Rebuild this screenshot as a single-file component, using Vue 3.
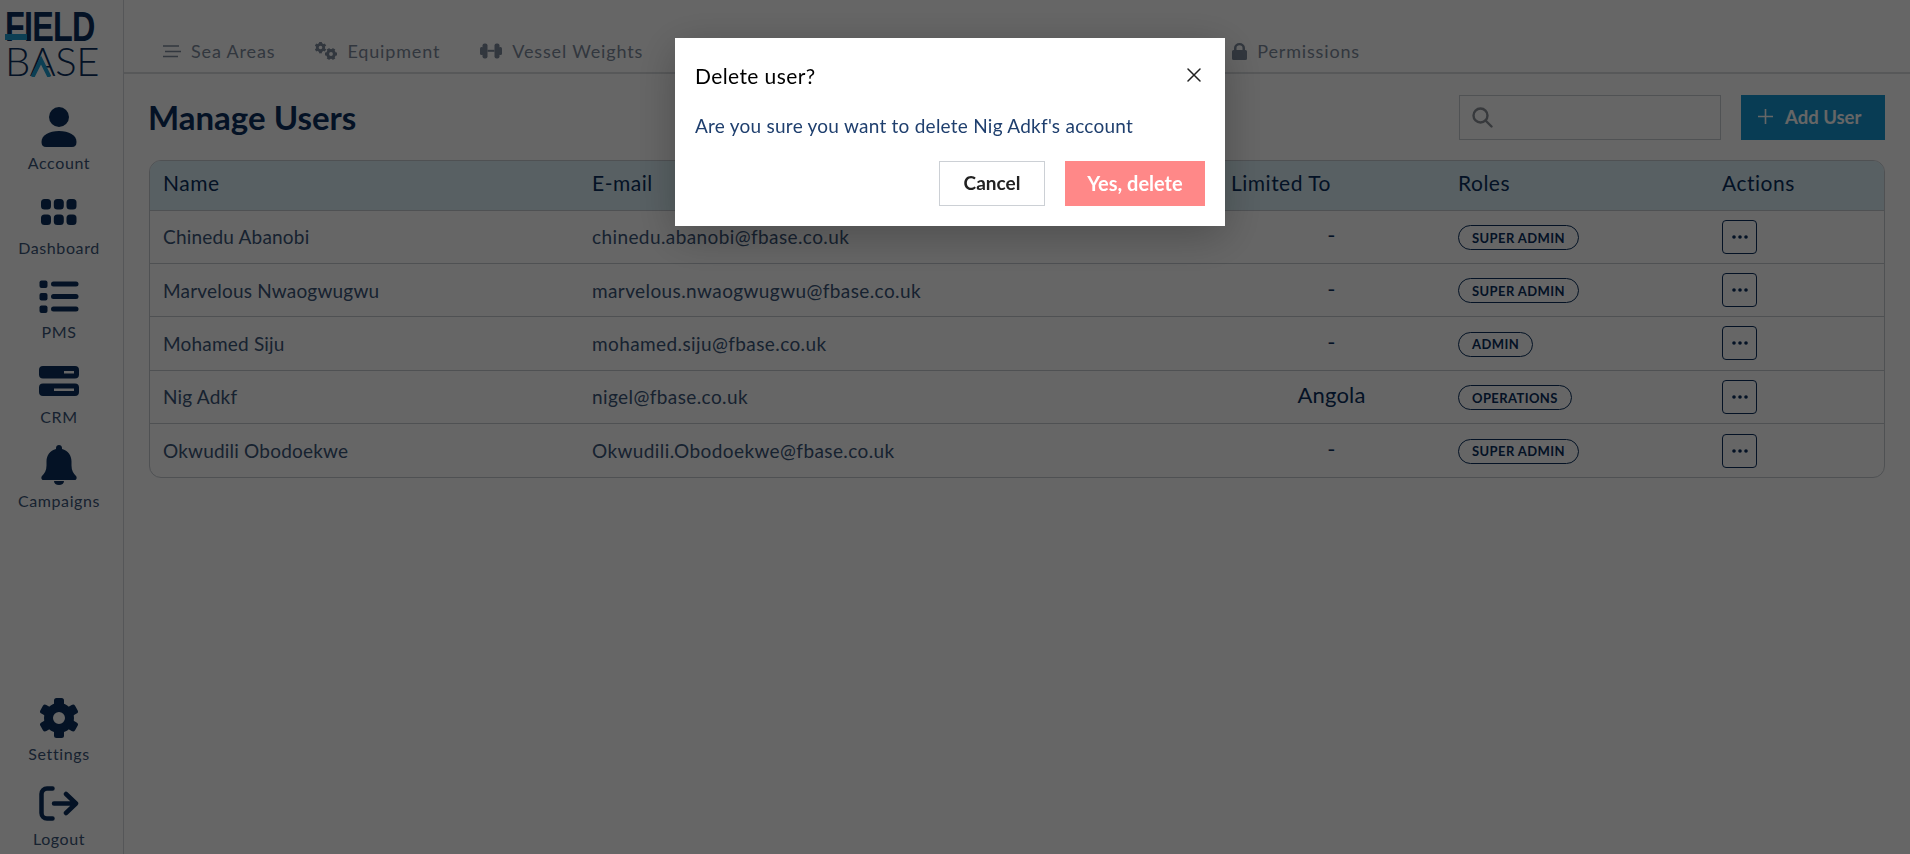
<script setup>
const rows = [
  { name: 'Chinedu Abanobi', email: 'chinedu.abanobi@fbase.co.uk', limited: '-', role: 'SUPER ADMIN' },
  { name: 'Marvelous Nwaogwugwu', email: 'marvelous.nwaogwugwu@fbase.co.uk', limited: '-', role: 'SUPER ADMIN' },
  { name: 'Mohamed Siju', email: 'mohamed.siju@fbase.co.uk', limited: '-', role: 'ADMIN' },
  { name: 'Nig Adkf', email: 'nigel@fbase.co.uk', limited: 'Angola', role: 'OPERATIONS' },
  { name: 'Okwudili Obodoekwe', email: 'Okwudili.Obodoekwe@fbase.co.uk', limited: '-', role: 'SUPER ADMIN' },
]
</script>

<template>
  <div class="page">
    <aside class="side">
      <div class="logo">
        <div class="logo-top"><span class="logo-word">FIELD</span><i class="logo-bar"></i></div>
        <div class="logo-bot">
          <span class="logo-word2">BASE</span>
          <svg class="chev" viewBox="0 0 30 30" width="30" height="30"><path d="M7.500 29 L15 11 L22.500 29Z" fill="#fff"/><path d="M6.500 30 L15 13 L23.500 30" fill="none" stroke="#1f9fd2" stroke-width="4"/></svg>
        </div>
      </div>
      <nav class="nav">
        <a class="item">
          <span class="ic"><svg width="36" height="40" viewBox="0 0 36 40"><circle cx="18" cy="10" r="10"/><path d="M0.5 35 C0.5 28 8 24 18 24 S35.500 28 35.500 35 C35.500 38.500 34 40 31 40 H5 C2 40 0.500 38.500 0.500 35Z"/></svg></span>
          <span class="lb">Account</span>
        </a>
        <a class="item">
          <span class="ic"><svg width="36" height="26" viewBox="0 0 36 26"><rect x="0" y="0" width="10" height="10.500" rx="3.500"/><rect x="12.800" y="0" width="10" height="10.500" rx="3.500"/><rect x="25.500" y="0" width="10" height="10.500" rx="3.500"/><rect x="0" y="15.500" width="10" height="10.500" rx="3.500"/><rect x="12.800" y="15.500" width="10" height="10.500" rx="3.500"/><rect x="25.500" y="15.500" width="10" height="10.500" rx="3.500"/></svg></span>
          <span class="lb">Dashboard</span>
        </a>
        <a class="item">
          <span class="ic"><svg width="40" height="33" viewBox="0 0 40 33"><rect x="0.500" y="0.500" width="8" height="7.500" rx="2"/><rect x="0.500" y="13" width="8" height="7.500" rx="2"/><rect x="0.500" y="25.500" width="8" height="7.500" rx="2"/><rect x="12" y="1.500" width="27.500" height="5" rx="2.500"/><rect x="12" y="14" width="27.500" height="5" rx="2.500"/><rect x="12" y="26.500" width="27.500" height="5" rx="2.500"/></svg></span>
          <span class="lb">PMS</span>
        </a>
        <a class="item">
          <span class="ic"><svg width="40" height="30" viewBox="0 0 40 30"><path fill-rule="evenodd" d="M4 0 H36 a4 4 0 0 1 4 4 V8.500 a4 4 0 0 1 -4 4 H4 a4 4 0 0 1 -4 -4 V4 a4 4 0 0 1 4 -4Z M25 5 V7.500 H35 V5Z"/><path fill-rule="evenodd" d="M4 17.500 H36 a4 4 0 0 1 4 4 V26 a4 4 0 0 1 -4 4 H4 a4 4 0 0 1 -4 -4 V21.500 a4 4 0 0 1 4 -4Z M15 22.500 V25 H35 V22.500Z"/></svg></span>
          <span class="lb">CRM</span>
        </a>
        <a class="item">
          <span class="ic"><svg width="36" height="40" viewBox="0 0 36 40"><path d="M18 0 c1.600 0 3 1.300 3 3 v1 c6 1.400 9.500 6.500 9.500 12.500 v4 c0 5 2 8 4.500 10.500 c1.400 1.500 .4 4 -1.600 4 H2.600 c-2 0 -3 -2.500 -1.600 -4 C3.500 28.500 5.500 25.500 5.500 20.500 v-4 C5.500 10.500 9 5.400 15 4 V3 C15 1.300 16.400 0 18 0Z M13 36 h10 c0 2.500 -2.200 4 -5 4 s-5 -1.500 -5 -4Z"/></svg></span>
          <span class="lb">Campaigns</span>
        </a>
      </nav>
      <nav class="nav nav-bottom">
        <a class="item">
          <span class="ic"><svg width="40" height="40" viewBox="-20 -20 40 40"><circle r="10.500" fill="none" stroke="currentColor" stroke-width="9"/><rect v-for="a in [0,60,120,180,240,300]" :key="a" x="-5" y="-20" width="10" height="10" rx="2.500" :transform="`rotate(${a})`"/></svg></span>
          <span class="lb">Settings</span>
        </a>
        <a class="item">
          <span class="ic"><svg width="40" height="35" viewBox="0 0 40 35" stroke="currentColor" stroke-width="4.500" stroke-linecap="round" stroke-linejoin="round"><path fill="none" d="M13.500 2.500 H8 a5.500 5.500 0 0 0 -5.500 5.500 V27 a5.500 5.500 0 0 0 5.500 5.500 H13.500"/><path fill="none" d="M15 17.500 H36 M27 8 L37 17.500 L27 27"/></svg></span>
          <span class="lb">Logout</span>
        </a>
      </nav>
    </aside>

    <main class="main">
      <div class="tabs">
        <a class="tab">
          <svg width="18" height="14" viewBox="0 0 18 14" fill="none" stroke="currentColor" stroke-width="1.600"><path d="M0 2 H16 M2 7.500 H18 M0 12.500 H15"/></svg>
          Sea Areas
        </a>
        <a class="tab">
          <svg width="22" height="18" viewBox="0 0 22 18">
            <g transform="translate(5.500 5.500)"><circle r="3.200" fill="none" stroke="currentColor" stroke-width="2.800"/><rect v-for="a in [0,60,120,180,240,300]" :key="a" x="-1.400" y="-5.800" width="2.800" height="2.600" :transform="`rotate(${a})`"/></g>
            <g transform="translate(16 12)"><circle r="3.400" fill="none" stroke="currentColor" stroke-width="3"/><rect v-for="a in [0,60,120,180,240,300]" :key="a" x="-1.500" y="-6" width="3" height="2.600" :transform="`rotate(${a + 30})`"/></g>
          </svg>
          Equipment
        </a>
        <a class="tab">
          <svg width="22" height="16" viewBox="0 0 22 16"><rect x="0" y="4" width="3.500" height="8" rx="1.500"/><rect x="2.500" y="0.500" width="5" height="15" rx="2"/><rect x="7.500" y="6.800" width="7" height="2"/><rect x="14.500" y="0.500" width="5" height="15" rx="2"/><rect x="18.500" y="4" width="3.500" height="8" rx="1.500"/></svg>
          Vessel Weights
        </a>
        <a class="tab tab-far">
          <svg width="15" height="17" viewBox="0 0 15 17"><path fill-rule="evenodd" d="M2 7 V5 a5.500 5 0 0 1 11 0 V7 h.5 a1.500 1.500 0 0 1 1.500 1.500 V15.500 a1.500 1.500 0 0 1 -1.500 1.500 H1.500 A1.500 1.500 0 0 1 0 15.500 V8.500 A1.500 1.500 0 0 1 1.500 7Z M4.500 7 H10.500 V5 a3 2.800 0 0 0 -6 0Z"/></svg>
          Permissions
        </a>
      </div>

      <section class="content">
        <div class="head">
          <h1>Manage Users</h1>
          <div class="search">
            <svg width="21" height="21" viewBox="0 0 21 21" fill="none" stroke="currentColor" stroke-width="2.400" stroke-linecap="round"><circle cx="8.500" cy="8.500" r="7"/><path d="M13.500 13.500 L19.500 19.500"/></svg>
          </div>
          <button class="add"><svg width="15" height="15" viewBox="0 0 15 15" stroke="currentColor" stroke-width="1.600"><path d="M7.500 0 V15 M0 7.500 H15"/></svg>Add User</button>
        </div>

        <div class="table-wrap">
          <table>
            <colgroup><col style="width:429px"><col style="width:639px"><col style="width:227px"><col style="width:264px"><col style="width:177px"></colgroup>
            <thead>
              <tr><th>Name</th><th>E-mail</th><th>Limited To</th><th>Roles</th><th>Actions</th></tr>
            </thead>
            <tbody>
              <tr v-for="r in rows" :key="r.email">
                <td class="nm">{{ r.name }}</td>
                <td>{{ r.email }}</td>
                <td class="lim">{{ r.limited }}</td>
                <td><span class="pill">{{ r.role }}</span></td>
                <td><button class="dots"><svg width="16" height="4" viewBox="0 0 16 4"><circle cx="2" cy="2" r="1.800"/><circle cx="8" cy="2" r="1.800"/><circle cx="14" cy="2" r="1.800"/></svg></button></td>
              </tr>
            </tbody>
          </table>
        </div>
      </section>
    </main>

    <div class="overlay">
      <div class="modal">
        <div class="m-head">
          <span class="m-title">Delete user?</span>
          <svg width="14" height="14" viewBox="0 0 14 14" stroke="#222" stroke-width="1.500" stroke-linecap="round"><path d="M1 1 L13 13 M13 1 L1 13"/></svg>
        </div>
        <p class="m-text">Are you sure you want to delete Nig Adkf's account</p>
        <div class="m-foot">
          <button class="cancel">Cancel</button>
          <button class="yes">Yes, delete</button>
        </div>
      </div>
    </div>
  </div>
</template>

<style>
html, body { margin: 0; background: #fff; }
</style>

<style scoped>
.page { display: flex; height: 854px; overflow: hidden; font-family: "Lato", "Noto Sans", sans-serif; color: #0a2f5c; background: #fff; }
.side { width: 123px; flex: none; border-right: 1px solid #d4d8dd; display: flex; flex-direction: column; align-items: flex-start; }
.logo { width: 123px; height: 105px; box-sizing: border-box; padding: 10px 0 0 5px; color: #0a2f5c; }
.logo-top { position: relative; height: 30px; width: 91px; line-height: 30px; font-size: 42px; }
.logo-word { display: inline-block; font-family: "Liberation Sans", sans-serif; font-weight: 700; transform-origin: left center; transform: scaleX(.77); letter-spacing: -1px; }
.logo-bar { position: absolute; left: 0; bottom: 0; width: 22px; height: 6px; background: #1f9fd2; }
.logo-bot { position: relative; margin-top: 7px; height: 29px; width: 91px; font-size: 40px; line-height: 29px; }
.logo-word2 { display: inline-block; font-family: "Lato", sans-serif; font-weight: 300; letter-spacing: -.4px; transform-origin: left center; }
.chev { position: absolute; left: 21px; top: 0; }
.nav { display: flex; flex-direction: column; gap: 16.6px; }
.nav-bottom { margin-top: auto; padding-bottom: 5px; }
.item { display: flex; flex-direction: column; align-items: center; gap: 4px; width: 118px; }
.ic { height: 44px; display: flex; align-items: center; justify-content: center; color: #0a2f5c; }
.ic svg { fill: currentColor; }
.lb { font-size: 16px; line-height: 20px; color: #3b5578; letter-spacing: .6px; }
.main { flex: 1; min-width: 0; }
.tabs { height: 74px; box-sizing: border-box; border-bottom: 2px solid #d9dcdf; display: flex; align-items: flex-end; padding: 0 0 9px 39px; gap: 40px; }
.tab { display: flex; align-items: center; gap: 10px; font-size: 18px; line-height: 24px; color: #7d8a9c; letter-spacing: .85px; }
.tab svg { fill: currentColor; flex: none; }
.tab-far { margin-left: 549px; }
.content { padding: 21px 25px 0; }
.head { display: flex; align-items: center; height: 45px; }
h1 { margin: 0 0 2px -1px; font-size: 33px; font-weight: 700; color: #0a2f5c; flex: 1; }
.search { width: 262px; height: 45px; box-sizing: border-box; border: 1px solid #c9cdd2; display: flex; align-items: center; padding-left: 12px; color: #8a8f96; }
.add { width: 144px; height: 45px; margin-left: 20px; border: 0; background: #1497d3; color: #fff; font: 700 18.5px "Lato", sans-serif; display: flex; align-items: center; gap: 12px; padding: 0 0 2px 17px; }
.table-wrap { margin-top: 20px; border: 1px solid #c5cad0; border-radius: 12px; overflow: hidden; }
table { width: 100%; table-layout: fixed; border-collapse: collapse; }
th { height: 49px; box-sizing: border-box; padding: 0 0 5px 13px; background: #dcf0f7; text-align: left; font-size: 21px; font-weight: 400; color: #0a2f5c; letter-spacing: .5px; }
td { height: 53.4px; box-sizing: border-box; padding: 0 0 0 13px; border-top: 1px solid #c5cad0; font-size: 19px; color: #3b5578; letter-spacing: .4px; }
td.nm { letter-spacing: .2px; }
.lim { padding: 0 0 4px; text-align: center; font-size: 22px; color: #0a2f5c; letter-spacing: .2px; }
.pill { display: inline-flex; align-items: center; height: 25px; box-sizing: border-box; padding: 0 13px; border: 1px solid #0a2f5c; border-radius: 13px; font-size: 13px; font-weight: 700; color: #0a2f5c; letter-spacing: .4px; vertical-align: middle; }
.dots { width: 35px; height: 34px; padding: 0; border: 1px solid #0a2f5c; border-radius: 4px; background: #fff; display: flex; align-items: center; justify-content: center; color: #0a2f5c; }
.dots svg { fill: currentColor; }

.overlay { position: fixed; inset: 0; background: rgba(0,0,0,.6); display: flex; justify-content: center; align-items: flex-start; padding: 38px 10px 0 0; }
.modal { width: 550px; height: 188px; box-sizing: border-box; padding: 23px 16px 20px 20px; background: #fff; box-shadow: 0 10px 40px rgba(0,0,0,.25); display: flex; flex-direction: column; }
.m-head { display: flex; justify-content: space-between; align-items: center; height: 28px; padding-right: 8px; }
.m-title { font-size: 21px; color: #000; letter-spacing: .4px; }
.m-text { margin: 25px 0 0; font-size: 19px; line-height: 24px; color: #1f3f6e; letter-spacing: .25px; }
.m-foot { display: flex; justify-content: flex-end; gap: 20px; margin-top: auto; padding-right: 4px; }
.cancel, .yes { height: 45px; font: 400 19px "Lato", sans-serif; padding: 0 0 2px; }
.cancel { width: 106px; background: #fff; border: 1px solid #ccd0d5; color: #222; font-weight: 700; }
.yes { width: 140px; background: #ff8888; border: 0; color: #fff; font-weight: 700; font-size: 20px; }
</style>
